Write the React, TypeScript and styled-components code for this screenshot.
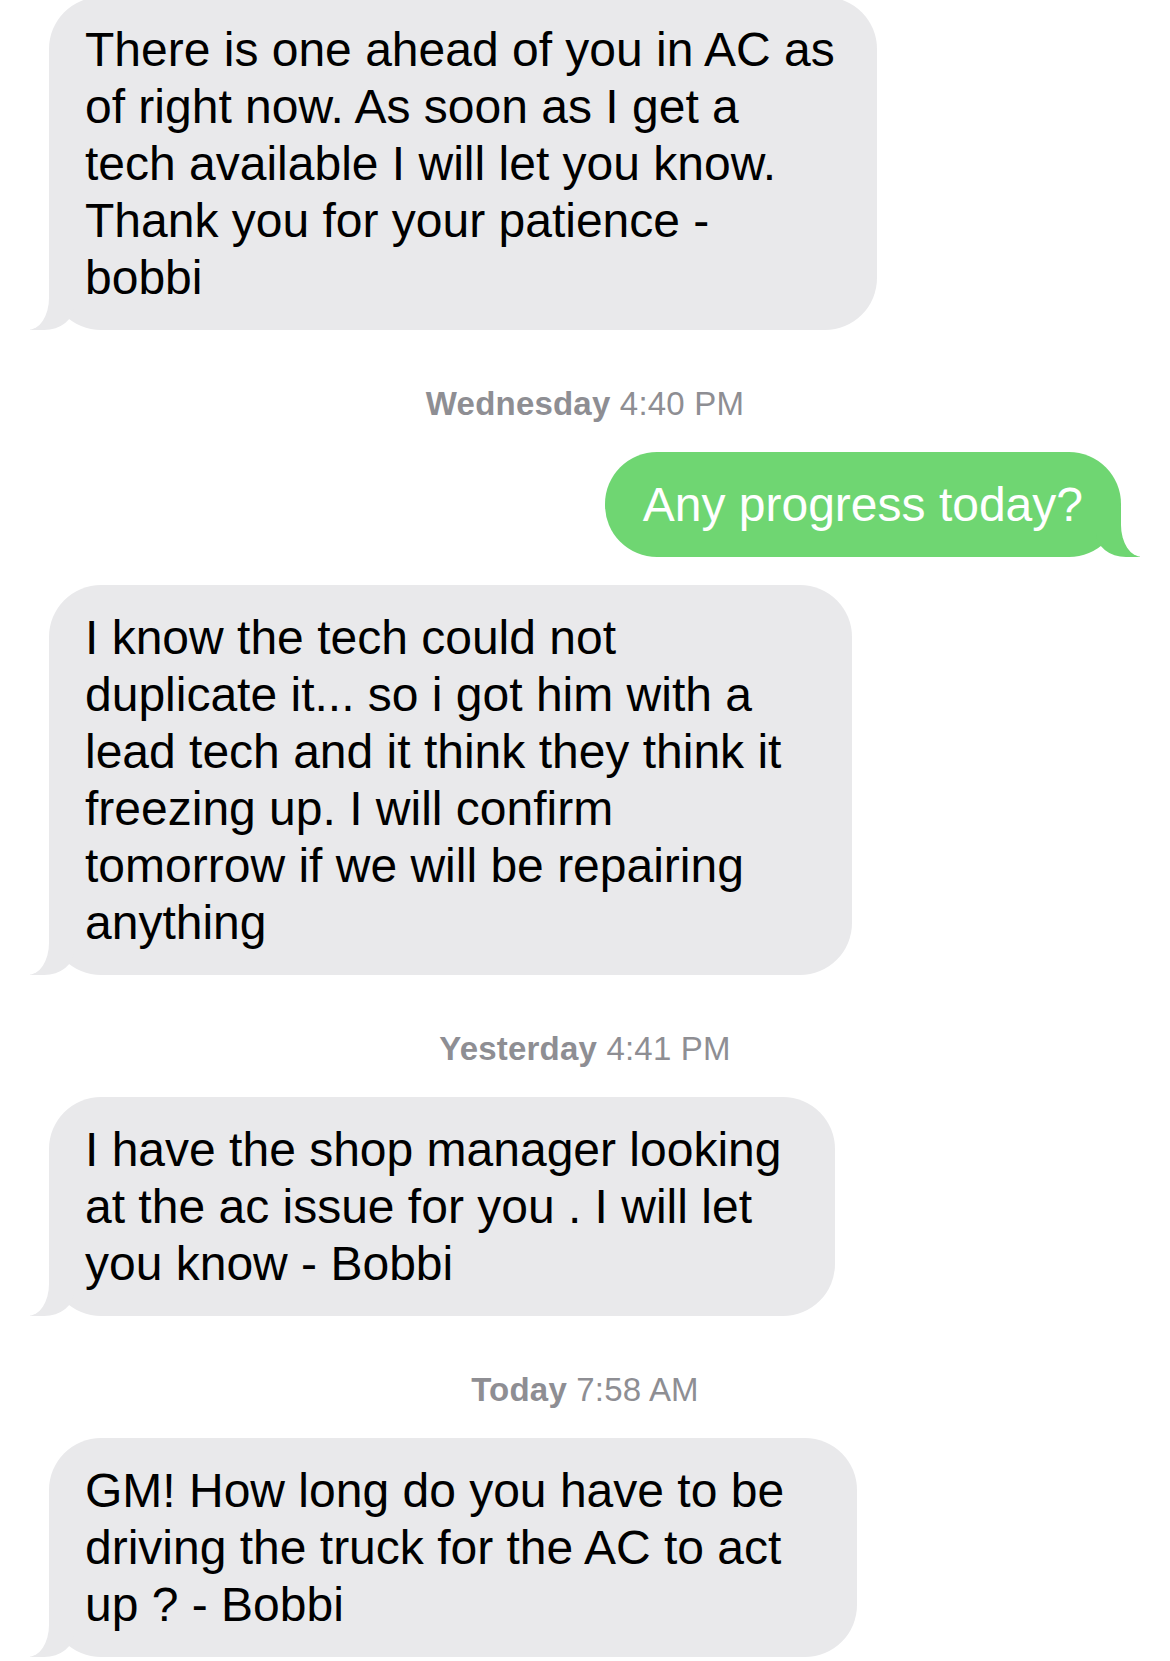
import styled, { createGlobalStyle } from 'styled-components'

const GlobalStyle = createGlobalStyle`
  html, body {
    margin: 0;
    padding: 0;
    background: #ffffff;
  }
  body {
    font-family: "Liberation Sans", Arial, sans-serif;
    -webkit-font-smoothing: antialiased;
  }
`

const GRAY = '#e9e9eb'
const GREEN = '#6fd672'

const Thread = styled.div`
  width: 1170px;
  display: flex;
  flex-direction: column;
  margin-top: -3px;
  padding-bottom: 6px;
  overflow: hidden;
`

const Bubble = styled.div<{ $sent?: boolean; $width?: number }>`
  position: relative;
  box-sizing: border-box;
  width: ${p => (p.$width ? `${p.$width}px` : 'auto')};
  align-self: ${p => (p.$sent ? 'flex-end' : 'flex-start')};
  margin: ${p => (p.$sent ? '0 49px 0 0' : '0 0 0 49px')};
  padding: ${p => (p.$sent ? '24px 38px' : '24px 40px 24px 36px')};
  background: ${p => (p.$sent ? GREEN : GRAY)};
  color: ${p => (p.$sent ? '#ffffff' : '#000000')};
  border-radius: 52px;
  font-size: 48px;
  line-height: 57px;
  white-space: nowrap;

  & + & {
    margin-top: 28px;
  }

  /* the tail */
  &::before {
    content: '';
    position: absolute;
    bottom: 0;
    ${p => (p.$sent ? 'right: -19px;' : 'left: -19px;')}
    width: 44px;
    height: 50px;
    background: ${p => (p.$sent ? GREEN : GRAY)};
    ${p =>
      p.$sent
        ? 'border-bottom-left-radius: 30px 24px;'
        : 'border-bottom-right-radius: 30px 24px;'}
  }

  &::after {
    content: '';
    position: absolute;
    bottom: 0;
    ${p => (p.$sent ? 'right: -60px;' : 'left: -60px;')}
    width: 60px;
    height: 50px;
    background: #ffffff;
    ${p =>
      p.$sent
        ? 'border-bottom-left-radius: 21px 32px;'
        : 'border-bottom-right-radius: 21px 32px;'}
  }
`

const Stamp = styled.div`
  align-self: center;
  margin: 54px 0 28px;
  font-size: 33px;
  line-height: 40px;
  letter-spacing: 0.2px;
  color: #8e8e93;

  b {
    font-weight: 600;
  }
`

type Msg =
  | { kind: 'stamp'; day: string; time: string }
  | { kind: 'in' | 'out'; lines: string[]; width?: number }

const messages: Msg[] = [
  {
    kind: 'in',
    width: 828,
    lines: [
      'There is one ahead of you in AC as',
      'of right now. As soon as I get a',
      'tech available I will let you know.',
      'Thank you for your patience -',
      'bobbi',
    ],
  },
  { kind: 'stamp', day: 'Wednesday', time: '4:40 PM' },
  { kind: 'out', lines: ['Any progress today?'] },
  {
    kind: 'in',
    width: 803,
    lines: [
      'I know the tech could not',
      'duplicate it... so i got him with a',
      'lead tech and it think they think it',
      'freezing up. I will confirm',
      'tomorrow if we will be repairing',
      'anything',
    ],
  },
  { kind: 'stamp', day: 'Yesterday', time: '4:41 PM' },
  {
    kind: 'in',
    width: 786,
    lines: [
      'I have the shop manager looking',
      'at the ac issue for you . I will let',
      'you know - Bobbi',
    ],
  },
  { kind: 'stamp', day: 'Today', time: '7:58 AM' },
  {
    kind: 'in',
    width: 808,
    lines: [
      'GM! How long do you have to be',
      'driving the truck for the AC to act',
      'up ? - Bobbi',
    ],
  },
]

function App() {
  return (
    <>
      <GlobalStyle />
      <Thread>
        {messages.map((m, i) =>
          m.kind === 'stamp' ? (
            <Stamp key={i}>
              <b>{m.day}</b> {m.time}
            </Stamp>
          ) : (
            <Bubble key={i} $sent={m.kind === 'out'} $width={m.width}>
              {m.lines.map((line, j) => (
                <span key={j}>
                  {j > 0 && <br />}
                  {line}
                </span>
              ))}
            </Bubble>
          )
        )}
      </Thread>
    </>
  )
}

export default App
